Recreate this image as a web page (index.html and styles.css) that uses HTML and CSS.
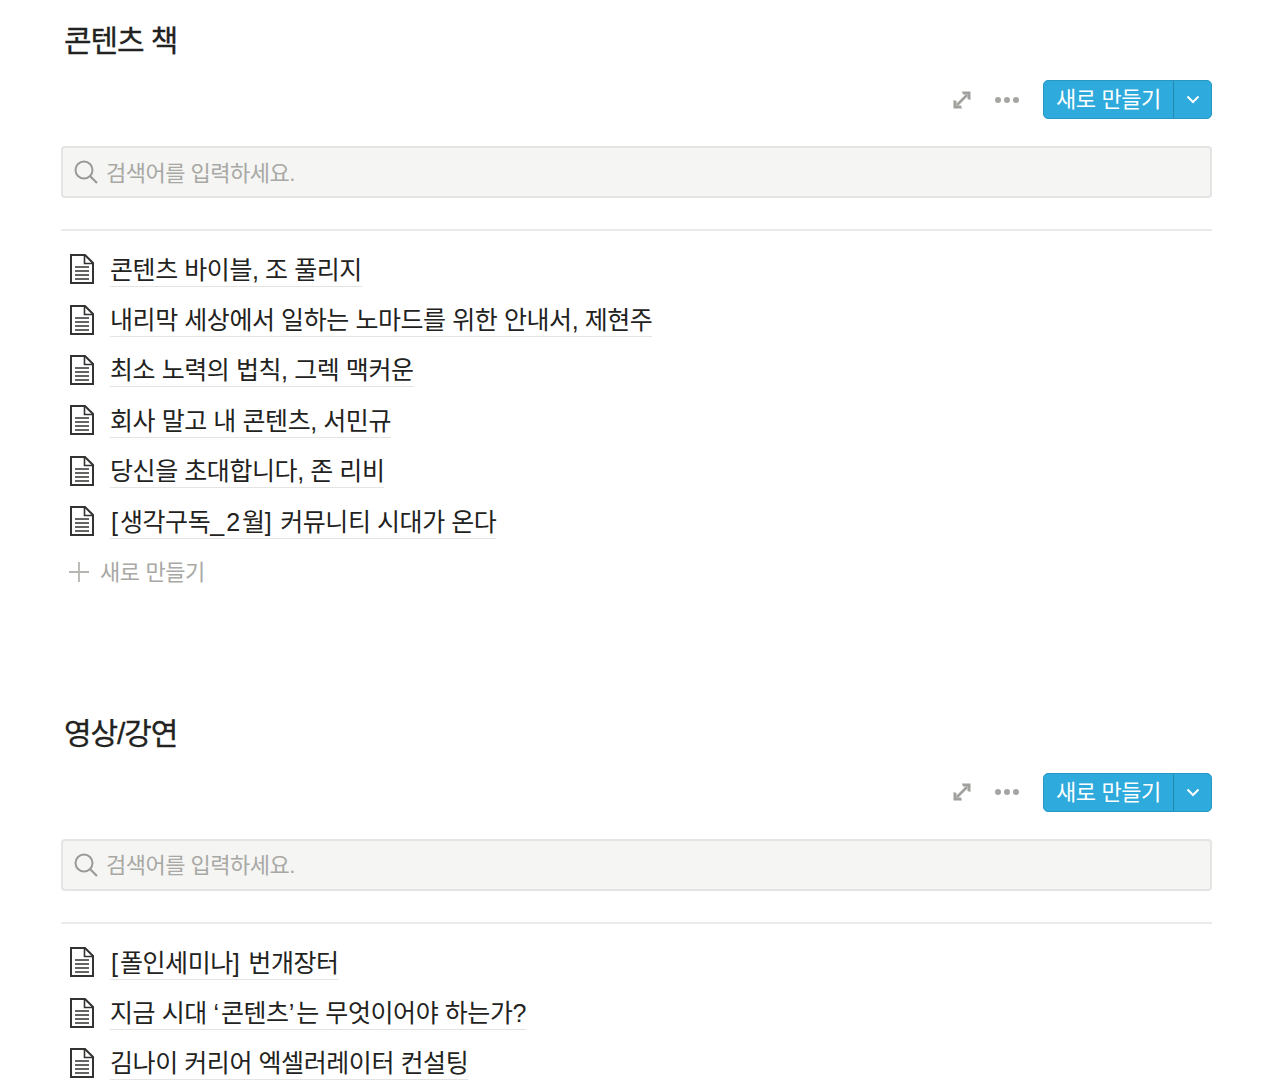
FILE: index.html
```html
<!DOCTYPE html>
<html lang="ko">
<head>
<meta charset="utf-8">
<title>콘텐츠</title>
<link rel="stylesheet" href="styles.css">
</head>
<body>
<svg class="sprite" width="0" height="0" aria-hidden="true">
  <symbol id="doc" viewBox="0 0 24 30">
    <path d="M1 1H15L23 9V29H1Z" fill="none" stroke="#333331" stroke-width="2"/>
    <path d="M14.500 1.500V9.500H22.500" fill="none" stroke="#333331" stroke-width="1.600"/>
    <path d="M5 13H19M5 17H19M5 21H19M5 25H19" fill="none" stroke="#333331" stroke-width="1.700"/>
  </symbol>
  <symbol id="expand" viewBox="0 0 18 18">
    <path d="M4 14L14 4" fill="none" stroke="#a0a09d" stroke-width="2.600"/>
    <path d="M9 0.500H17.500V9L14.500 8V3.500H10Z M0.500 9V17.500H9L8 14.500H3.500V10Z" fill="#a0a09d"/>
  </symbol>
  <symbol id="search" viewBox="0 0 24 24">
    <circle cx="10" cy="10" r="8.500" fill="none" stroke="#9b9a97" stroke-width="2"/>
    <path d="M16 16L23 23" fill="none" stroke="#9b9a97" stroke-width="2.200"/>
  </symbol>
</svg>
<main class="page">
  <section class="db db-first">
    <h2 class="db-title">콘텐츠 책</h2>
    <div class="toolbar">
      <svg class="ico-expand"><use href="#expand"/></svg>
      <span class="dots"><i></i><i></i><i></i></span>
      <div class="new-btn"><span class="new-label">새로 만들기</span><span class="new-arrow"><svg viewBox="0 0 14 9" class="chev"><path d="M1.500 1.500L7 7L12.500 1.500" fill="none" stroke="#fff" stroke-width="2"/></svg></span></div>
    </div>
    <div class="search"><svg class="ico-search"><use href="#search"/></svg><span class="search-text">검색어를 입력하세요.</span></div>
    <hr class="rule">
    <ul class="list">
      <li class="row"><svg class="ico-doc"><use href="#doc"/></svg><a class="link">콘텐츠 바이블, 조 풀리지</a></li>
      <li class="row"><svg class="ico-doc"><use href="#doc"/></svg><a class="link">내리막 세상에서 일하는 노마드를 위한 안내서, 제현주</a></li>
      <li class="row"><svg class="ico-doc"><use href="#doc"/></svg><a class="link">최소 노력의 법칙, 그렉 맥커운</a></li>
      <li class="row"><svg class="ico-doc"><use href="#doc"/></svg><a class="link">회사 말고 내 콘텐츠, 서민규</a></li>
      <li class="row"><svg class="ico-doc"><use href="#doc"/></svg><a class="link">당신을 초대합니다, 존 리비</a></li>
      <li class="row"><svg class="ico-doc"><use href="#doc"/></svg><a class="link"><span class="sym sym-open">[</span>생각구독<span class="sym">_2</span>월<span class="sym">]</span> 커뮤니티 시대가 온다</a></li>
    </ul>
    <div class="add"><svg class="ico-plus" viewBox="0 0 20 20"><path d="M10 0V20M0 10H20" stroke="#b5b5b2" stroke-width="1.800"/></svg><span class="add-text">새로 만들기</span></div>
  </section>
  <section class="db">
    <h2 class="db-title">영상/강연</h2>
    <div class="toolbar">
      <svg class="ico-expand"><use href="#expand"/></svg>
      <span class="dots"><i></i><i></i><i></i></span>
      <div class="new-btn"><span class="new-label">새로 만들기</span><span class="new-arrow"><svg viewBox="0 0 14 9" class="chev"><path d="M1.500 1.500L7 7L12.500 1.500" fill="none" stroke="#fff" stroke-width="2"/></svg></span></div>
    </div>
    <div class="search"><svg class="ico-search"><use href="#search"/></svg><span class="search-text">검색어를 입력하세요.</span></div>
    <hr class="rule">
    <ul class="list">
      <li class="row"><svg class="ico-doc"><use href="#doc"/></svg><a class="link"><span class="sym sym-open">[</span>폴인세미나<span class="sym">]</span> 번개장터</a></li>
      <li class="row"><svg class="ico-doc"><use href="#doc"/></svg><a class="link">지금 시대 <span class="sym">‘</span>콘텐츠<span class="sym">’</span>는 무엇이어야 하는가?</a></li>
      <li class="row"><svg class="ico-doc"><use href="#doc"/></svg><a class="link">김나이 커리어 엑셀러레이터 컨설팅</a></li>
    </ul>
  </section>
</main>
</body>
</html>
```
FILE: styles.css
```css
html, body {
  margin: 0;
  padding: 0;
  height: 1083px;
  overflow: hidden;
  background: #fff;
}
body {
  font-family: "Liberation Sans", "Noto Sans CJK KR", sans-serif;
  color: #2f2f2d;
}
.sprite { position: absolute; }
.page {
  display: flex;
  flex-direction: column;
  gap: 116px;
  padding: 0 68px 0 61px;
}
.db { display: flex; flex-direction: column; }
.db-first { padding-top: 19px; }
.db-title {
  margin: 0 0 0 3px;
  padding-top: 3px;
  font-size: 30px;
  line-height: 37px;
  font-weight: 400;
  letter-spacing: -1.100px;
  color: #222220;
  -webkit-text-stroke: 0.3px #222220;
}
.toolbar {
  display: flex;
  align-items: center;
  justify-content: flex-end;
  margin-top: 21px;
  height: 39px;
}
.ico-expand { width: 18px; height: 18px; }
.dots { display: flex; gap: 3px; margin: 0 24px 0 24px; }
.dots i { width: 6px; height: 6px; border-radius: 50%; background: #a5a5a2; }
.new-btn {
  display: flex;
  height: 39px;
  box-sizing: border-box;
  width: 169px;
  background: #2eaadc;
  border: 1px solid #2797c4;
  border-radius: 5px;
  color: #fff;
}
.new-label {
  flex: 1;
  text-align: center;
  font-size: 22px;
  line-height: 37px;
  border-right: 1px solid #2388b0;
  letter-spacing: -0.400px;
}
.new-arrow {
  width: 37px;
  display: flex;
  align-items: center;
  justify-content: center;
}
.chev { width: 14px; height: 9px; }
.search {
  display: flex;
  align-items: center;
  gap: 8px;
  height: 52px;
  box-sizing: border-box;
  margin-top: 27px;
  padding-left: 11px;
  background: #f5f5f3;
  border: 2px solid #e4e4e2;
  border-radius: 4px;
  font-size: 22px;
  color: #a8a8a5;
  letter-spacing: -0.500px;
}
.search-text { padding-bottom: 3px; }
.ico-search { width: 24px; height: 24px; }
.rule {
  margin: 31px 0 0;
  border: 0;
  border-top: 2px solid #ebebe9;
}
.list {
  list-style: none;
  margin: 13px 0 0;
  padding: 0;
}
.row {
  display: flex;
  align-items: center;
  height: 50.400px;
  padding-left: 9px;
}
.ico-doc { width: 24px; height: 30px; flex: none; }
.link {
  margin-left: 16px;
  padding-top: 2px;
  font-size: 25px;
  line-height: 32px;
  border-bottom: 1px solid #e4e4e2;
  color: #222220;
  letter-spacing: -0.420px;
}
.sym { letter-spacing: 2px; }
.sym-open { margin-left: 1px; }
.add {
  display: flex;
  align-items: center;
  height: 49.600px;
  padding-left: 8px;
  font-size: 22px;
  color: #a8a8a5;
  letter-spacing: -0.400px;
}
.add-text { padding-bottom: 3px; }
.ico-plus { width: 20px; height: 20px; margin-right: 11px; margin-top: 1px; }
```
